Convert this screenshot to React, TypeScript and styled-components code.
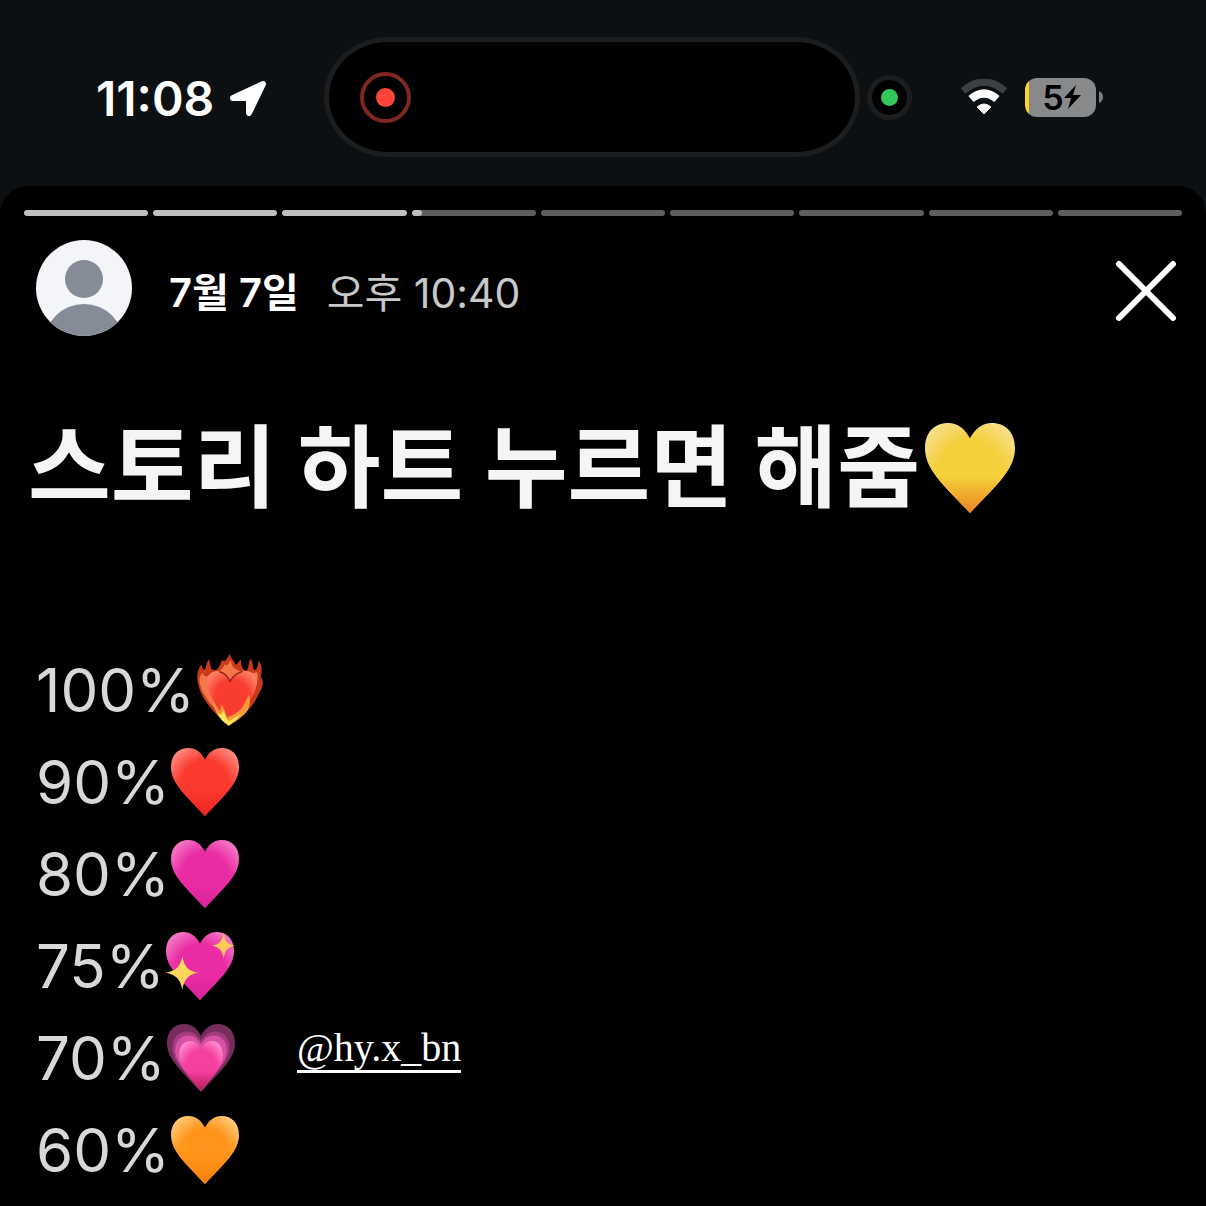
import React, { useId } from "react";
import styled, { createGlobalStyle } from "styled-components";

const sans = `Inter, "Noto Sans CJK KR", sans-serif`;

const GlobalStyle = createGlobalStyle`
  * { box-sizing: border-box; }
  body { margin: 0; background: #000; color: #fff; font-family: ${sans}; }
`;

const Screen = styled.div`
  min-height: 100vh;
  background: linear-gradient(#0c1013 240px, #000 240px);
  overflow: hidden;
`;

const StatusBar = styled.header`
  display: grid;
  grid-template-columns: 1fr auto 1fr;
  align-items: center;
  height: 186px;
  padding: 8px 0 0 30px;
`;

const ClockGroup = styled.div`
  display: flex;
  align-items: center;
  gap: 15px;
  padding: 3px 0 0 66px;
`;

const Clock = styled.time`
  font-size: 48px;
  line-height: 56px;
  font-weight: 600;
`;

const IslandGroup = styled.div`
  display: flex;
  align-items: center;
  gap: 7px;
`;

const Island = styled.div`
  display: flex;
  align-items: center;
  width: 536px;
  height: 120px;
  padding-left: 31px;
  border: 5px solid #1b1d1f;
  border-radius: 64px / 60px;
  background: #000;
`;

const RecordRing = styled.span`
  display: grid;
  place-items: center;
  width: 51px;
  height: 51px;
  border: 4px solid #7f2722;
  border-radius: 50%;
`;

const Dot = styled.span<{ $size: number; $color: string }>`
  width: ${(p) => p.$size}px;
  height: ${(p) => p.$size}px;
  border-radius: 50%;
  background: ${(p) => p.$color};
`;

const CameraPill = styled.div`
  display: grid;
  place-items: center;
  width: 45px;
  height: 45px;
  border: 5px solid #1b1d1f;
  border-radius: 50%;
  background: #000;
`;

const SystemGroup = styled.div`
  display: flex;
  align-items: center;
  justify-content: flex-end;
  padding-right: 103px;
`;

const Battery = styled.div`
  display: flex;
  align-items: center;
  justify-content: center;
  width: 71px;
  height: 39px;
  margin: 0 3px 0 17px;
  padding-left: 2px;
  border-radius: 12px;
  background: linear-gradient(90deg, #fdd426 4px, #88898b 4px);
  color: #000;
  font-size: 34px;
  line-height: 39px;
  font-weight: 600;
`;

const Story = styled.main`
  padding: 24px 24px 0;
  border-radius: 28px 28px 0 0;
  background: #000;
  min-height: calc(100vh - 186px);
`;

const Progress = styled.div`
  display: flex;
  gap: 5px;
`;

const Segment = styled.span`
  flex: 1;
  height: 6px;
  border-radius: 3px;
  background: #5e5e5e;
  overflow: hidden;
`;

const Fill = styled.span`
  display: block;
  height: 100%;
  border-radius: 3px;
  background: #bebebe;
`;

const StoryHeader = styled.div`
  display: flex;
  align-items: center;
  padding: 24px 0 0 12px;
`;

const StoryDate = styled.strong`
  margin: 10px 28px 0 37px;
  font-size: 40px;
  line-height: 56px;
  font-weight: 600;
`;

const StoryTime = styled.time`
  margin-top: 10px;
  font-size: 41px;
  line-height: 56px;
  font-weight: 400;
  color: #c8c8c8;
`;

const CloseButton = styled.button`
  display: flex;
  margin: 6px 4px 0 auto;
  padding: 0;
  border: 0;
  background: none;
  color: #fff;
`;

const Title = styled.h1`
  display: flex;
  align-items: center;
  gap: 5px;
  margin: 68px 0 0 4px;
  font-size: 90px;
  line-height: 128px;
  font-weight: 700;
  color: #f5f5f5;
  white-space: nowrap;
`;

const Body = styled.div`
  display: flex;
  align-items: flex-start;
  gap: 33px;
  margin-top: 112px;
`;

const Scores = styled.ul`
  margin: 0;
  padding: 0 0 0 12px;
  list-style: none;
`;

const Score = styled.li`
  display: flex;
  align-items: center;
  gap: 1px;
  height: 92px;
  font-size: 60px;
  line-height: 92px;
  font-weight: 400;
  color: #d8d8d8;
`;

const Mention = styled.a`
  margin-top: 382px;
  border-bottom: 3px solid #fff;
  color: #fff;
  font-family: "Liberation Serif", serif;
  font-size: 40px;
  line-height: 44px;
  text-decoration: none;
`;

const HEART =
  "M50 17C44 6 36 0 26 0 10 0 0 11 0 28 0 52 22 70 50 100 78 70 100 52 100 28 100 11 90 0 74 0 64 0 56 6 50 17Z";

type Kind = "fire" | "red" | "pink" | "sparkle" | "growing" | "orange" | "yellow";

const colours: Record<Kind, [string, string, string]> = {
  fire: ["#ff8468", "#f73d30", "#ee3a20"],
  red: ["#ff8b80", "#fb3a2f", "#ee2420"],
  pink: ["#f57bc8", "#ea2ca4", "#d9249b"],
  sparkle: ["#f57bc8", "#ea2ca4", "#d9249b"],
  growing: ["#ff8fcf", "#f5409f", "#b91d5c"],
  orange: ["#ffcb7a", "#ff951b", "#f57f0c"],
  yellow: ["#f8df8f", "#f4d03c", "#ec8220"],
};

function Heart({ kind, size = 68 }: { kind: Kind; size?: number }) {
  const id = useId();
  const [top, mid, low] = colours[kind];
  const fill = `url(#${id})`;
  return (
    <svg width={size} height={size} viewBox="0 0 100 100" overflow="visible" role="img" aria-label={`${kind} heart`}>
      <defs>
        <radialGradient id={id} cx="0.5" cy="0.5" r="0.62" gradientTransform="translate(0 0.02)">
          <stop offset="0" stopColor={mid} />
          <stop offset="0.55" stopColor={mid} />
          <stop offset="1" stopColor={top} />
        </radialGradient>
        <linearGradient id={`${id}-low`} x1="0" y1="0" x2="0" y2="1">
          <stop offset="0.35" stopColor={mid} stopOpacity="0" />
          <stop offset="0.6" stopColor={mid} />
          <stop offset="1" stopColor={low} />
        </linearGradient>
      </defs>
      {kind === "fire" && (
        <>
          <path d="M48 101C30 88 4 62 2 34 1 24 4 18 8 12 9 18 10 20 13 20 16 14 15 9 19 5 22 11 20 16 24 20 30 24 35 16 38 6 43 10 46 4 49-3 52 5 57 7 58 13 62 11 63 7 66 5 66 14 68 20 74 22 79 16 76 9 81 4 84 12 83 18 87 21 91 18 91 12 92 7 98 15 97 24 95 30 100 37 99 45 93 54 84 76 68 90 48 101Z" fill="#c93a1c" />
          <path d="M44 92C22 74 5 54 5 34 6 29 8 27 10 25 12 31 16 32 20 27 30 28 39 20 42 12 46 17 49 10 51 6 53 15 55 18 60 20 68 26 80 26 90 24 92 30 90 40 88 46 80 62 70 80 44 92Z" fill="#f4764a" />
          <path d="M50 38C45 26 38 21 30 22 19 23 15 33 17 44 20 62 34 80 50 98 68 79 88 61 89 40 89 28 82 21 71 22 61 22 54 28 50 38Z" fill={fill} />
          <path d="M34 23C42 25 47 30 50 37 54 30 60 25 68 23" fill="none" stroke="#852014" strokeWidth="2" />
          <path d="M48 103C36 93 26 82 25 66 29 72 31 78 34 83 37 80 36 74 38 71 41 78 43 82 46 91 53 86 58 86 64 80 71 74 73 66 78 57 81 68 79 78 71 86 63 94 55 98 48 103Z" fill="#f99a38" />
          <path d="M48 102C40 97 34 91 31 83 36 87 39 86 41 80 43 87 44 91 48 96 54 93 60 89 66 85 60 94 54 98 48 102Z" fill="#ffe65c" />
        </>
      )}
      {kind === "growing" && (
        <>
          <path d={HEART} fill="#752d5c" />
          <path d={HEART} fill="#a43a80" transform="translate(8 11) scale(.84)" />
          <path d={HEART} fill="#d752a4" transform="translate(12 17) scale(.76)" />
          <path d={HEART} fill={fill} transform="translate(18 25) scale(.64 .73)" />
          <path d={HEART} fill={`url(#${id}-low)`} transform="translate(18 25) scale(.64 .73)" />
        </>
      )}
      {kind !== "fire" && kind !== "growing" && (
        <>
          <path d={HEART} fill={fill} />
          <path d={HEART} fill={`url(#${id}-low)`} />
        </>
      )}
      {kind === "sparkle" && (
        <>
          <path d="M24 36C27 51 32 57 47 60 32 63 27 69 24 85 21 69 15 63-1 60 15 57 21 51 24 36Z" fill="#ffd65c" />
          <path d="M85 2C87 14 90 18 101 20 90 23 87 27 85 38 82 27 79 23 68 20 79 18 82 14 85 2Z" fill="#ffc95c" />
        </>
      )}
    </svg>
  );
}

const scores: { value: string; kind: Kind }[] = [
  { value: "100%", kind: "fire" },
  { value: "90%", kind: "red" },
  { value: "80%", kind: "pink" },
  { value: "75%", kind: "sparkle" },
  { value: "70%", kind: "growing" },
  { value: "60%", kind: "orange" },
];

const progress = [100, 100, 100, 8, 0, 0, 0, 0, 0];

export default function App() {
  return (
    <Screen>
      <GlobalStyle />
      <StatusBar>
        <ClockGroup>
          <Clock>11:08</Clock>
          <svg width="38" height="38" viewBox="0 0 38 38" aria-hidden="true">
            <path d="M4 18 34 4 20 33V18Z" fill="#fff" stroke="#fff" strokeWidth="6" strokeLinejoin="round" />
          </svg>
        </ClockGroup>
        <IslandGroup>
          <Island>
            <RecordRing>
              <Dot $size={19} $color="#ff453a" />
            </RecordRing>
          </Island>
          <CameraPill>
            <Dot $size={17} $color="#34c759" />
          </CameraPill>
        </IslandGroup>
        <SystemGroup>
          <svg width="48" height="36" viewBox="0 0 48 36" aria-hidden="true">
            <path d="M3 12Q24-6 45 12" fill="none" stroke="#3d4042" strokeWidth="7" />
            <path d="M11 20Q24 9 37 20" fill="none" stroke="#fff" strokeWidth="8" />
            <path d="M17 28Q24 22 31 28L24 35Z" fill="#fff" stroke="#fff" strokeLinejoin="round" />
          </svg>
          <Battery>
            5
            <svg width="17" height="24" viewBox="0 0 17 24" aria-hidden="true">
              <path d="M12 0 0 13H7L4 24 17 10H9Z" fill="#000" />
            </svg>
          </Battery>
          <svg width="4" height="12" viewBox="0 0 4 12" aria-hidden="true">
            <path d="M0 0Q4 2 4 6T0 12Z" fill="#7c7e80" />
          </svg>
        </SystemGroup>
      </StatusBar>
      <Story>
        <Progress>
          {progress.map((value, i) => (
            <Segment key={i}>
              <Fill style={{ width: `${value}%` }} />
            </Segment>
          ))}
        </Progress>
        <StoryHeader>
          <svg width="96" height="96" viewBox="0 0 96 96" role="img" aria-label="Profile">
            <clipPath id="avatar">
              <circle cx="48" cy="48" r="48" />
            </clipPath>
            <g clipPath="url(#avatar)">
              <path d="M0 0H96V96H0Z" fill="#f3f5f8" />
              <circle cx="48" cy="39" r="19" fill="#858b97" />
              <circle cx="48" cy="104" r="40" fill="#858b97" />
            </g>
          </svg>
          <StoryDate>7월 7일</StoryDate>
          <StoryTime>오후 10:40</StoryTime>
          <CloseButton type="button" aria-label="Close">
            <svg width="64" height="64" viewBox="0 0 64 64" aria-hidden="true">
              <path d="M5 5 59 59M59 5 5 59" stroke="currentColor" strokeWidth="6" strokeLinecap="round" />
            </svg>
          </CloseButton>
        </StoryHeader>
        <Title>
          스토리 하트 누르면 해줌
          <Heart kind="yellow" size={90} />
        </Title>
        <Body>
          <Scores>
            {scores.map((score) => (
              <Score key={score.value}>
                {score.value}
                <Heart kind={score.kind} />
              </Score>
            ))}
          </Scores>
          <Mention href="#hy.x_bn">@hy.x_bn</Mention>
        </Body>
      </Story>
    </Screen>
  );
}
